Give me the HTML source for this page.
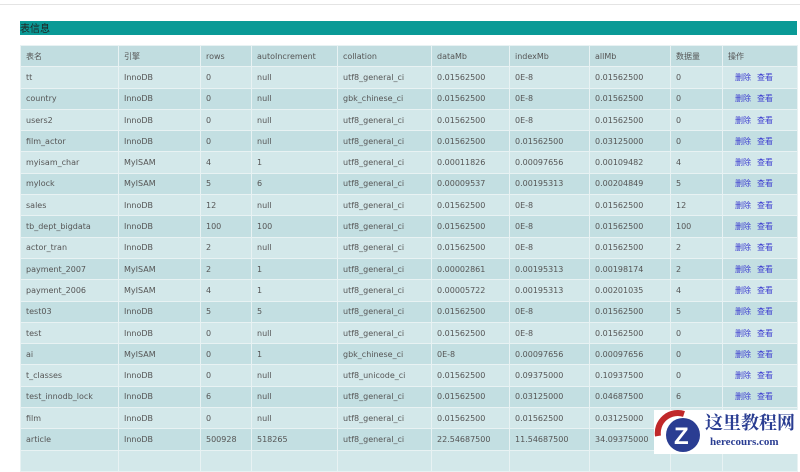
<!DOCTYPE html>
<html><head><meta charset="utf-8"><style>
*{margin:0;padding:0;box-sizing:border-box}
body{width:800px;height:454px;overflow:hidden;background:#fff;font-family:"DejaVu Sans","Noto Sans CJK SC",sans-serif;font-size:8px;color:#555;position:relative}
.top{position:absolute;left:0;top:4px;width:800px;height:1px;background:#e4e4e4}
.bar{position:absolute;left:20px;top:21px;width:777px;height:14px;background:#0a9a96;color:#222;font-size:10px;line-height:14px;font-family:"Noto Sans CJK SC",sans-serif}
table{position:absolute;left:20px;top:45px;width:777px;border-collapse:collapse;table-layout:fixed}
td{height:21.3px;border:1px solid #e8f2f3;padding-left:5px;white-space:nowrap;overflow:hidden;font-family:"DejaVu Sans","Noto Sans CJK SC",sans-serif;font-size:8px}
tr.h td{background:#c1dde0}
tr:nth-child(even) td{background:#d3e8ea}
tr:nth-child(odd):not(.h) td{background:#c3dfe2}
a{color:#3b3bd0;text-decoration:none;margin-left:7px;margin-right:6px;font-family:"Noto Sans CJK SC",sans-serif}
.logo{position:absolute;left:654px;top:410px;width:146px;height:44px;background:#fff}
</style></head><body>
<div class="top"></div>
<div class="bar">表信息</div>
<table>
<colgroup><col style="width:98px"><col style="width:82px"><col style="width:51px"><col style="width:86px"><col style="width:94px"><col style="width:78px"><col style="width:80px"><col style="width:81px"><col style="width:52px"><col style="width:75px"></colgroup>
<tr class="h"><td>表名</td><td>引擎</td><td>rows</td><td>autoIncrement</td><td>collation</td><td>dataMb</td><td>indexMb</td><td>allMb</td><td>数据量</td><td>操作</td></tr>
<tr><td>tt</td><td>InnoDB</td><td>0</td><td>null</td><td>utf8_general_ci</td><td>0.01562500</td><td>0E-8</td><td>0.01562500</td><td>0</td><td><a>删除</a><a style="margin-left:0">查看</a></td></tr>
<tr><td>country</td><td>InnoDB</td><td>0</td><td>null</td><td>gbk_chinese_ci</td><td>0.01562500</td><td>0E-8</td><td>0.01562500</td><td>0</td><td><a>删除</a><a style="margin-left:0">查看</a></td></tr>
<tr><td>users2</td><td>InnoDB</td><td>0</td><td>null</td><td>utf8_general_ci</td><td>0.01562500</td><td>0E-8</td><td>0.01562500</td><td>0</td><td><a>删除</a><a style="margin-left:0">查看</a></td></tr>
<tr><td>film_actor</td><td>InnoDB</td><td>0</td><td>null</td><td>utf8_general_ci</td><td>0.01562500</td><td>0.01562500</td><td>0.03125000</td><td>0</td><td><a>删除</a><a style="margin-left:0">查看</a></td></tr>
<tr><td>myisam_char</td><td>MyISAM</td><td>4</td><td>1</td><td>utf8_general_ci</td><td>0.00011826</td><td>0.00097656</td><td>0.00109482</td><td>4</td><td><a>删除</a><a style="margin-left:0">查看</a></td></tr>
<tr><td>mylock</td><td>MyISAM</td><td>5</td><td>6</td><td>utf8_general_ci</td><td>0.00009537</td><td>0.00195313</td><td>0.00204849</td><td>5</td><td><a>删除</a><a style="margin-left:0">查看</a></td></tr>
<tr><td>sales</td><td>InnoDB</td><td>12</td><td>null</td><td>utf8_general_ci</td><td>0.01562500</td><td>0E-8</td><td>0.01562500</td><td>12</td><td><a>删除</a><a style="margin-left:0">查看</a></td></tr>
<tr><td>tb_dept_bigdata</td><td>InnoDB</td><td>100</td><td>100</td><td>utf8_general_ci</td><td>0.01562500</td><td>0E-8</td><td>0.01562500</td><td>100</td><td><a>删除</a><a style="margin-left:0">查看</a></td></tr>
<tr><td>actor_tran</td><td>InnoDB</td><td>2</td><td>null</td><td>utf8_general_ci</td><td>0.01562500</td><td>0E-8</td><td>0.01562500</td><td>2</td><td><a>删除</a><a style="margin-left:0">查看</a></td></tr>
<tr><td>payment_2007</td><td>MyISAM</td><td>2</td><td>1</td><td>utf8_general_ci</td><td>0.00002861</td><td>0.00195313</td><td>0.00198174</td><td>2</td><td><a>删除</a><a style="margin-left:0">查看</a></td></tr>
<tr><td>payment_2006</td><td>MyISAM</td><td>4</td><td>1</td><td>utf8_general_ci</td><td>0.00005722</td><td>0.00195313</td><td>0.00201035</td><td>4</td><td><a>删除</a><a style="margin-left:0">查看</a></td></tr>
<tr><td>test03</td><td>InnoDB</td><td>5</td><td>5</td><td>utf8_general_ci</td><td>0.01562500</td><td>0E-8</td><td>0.01562500</td><td>5</td><td><a>删除</a><a style="margin-left:0">查看</a></td></tr>
<tr><td>test</td><td>InnoDB</td><td>0</td><td>null</td><td>utf8_general_ci</td><td>0.01562500</td><td>0E-8</td><td>0.01562500</td><td>0</td><td><a>删除</a><a style="margin-left:0">查看</a></td></tr>
<tr><td>ai</td><td>MyISAM</td><td>0</td><td>1</td><td>gbk_chinese_ci</td><td>0E-8</td><td>0.00097656</td><td>0.00097656</td><td>0</td><td><a>删除</a><a style="margin-left:0">查看</a></td></tr>
<tr><td>t_classes</td><td>InnoDB</td><td>0</td><td>null</td><td>utf8_unicode_ci</td><td>0.01562500</td><td>0.09375000</td><td>0.10937500</td><td>0</td><td><a>删除</a><a style="margin-left:0">查看</a></td></tr>
<tr><td>test_innodb_lock</td><td>InnoDB</td><td>6</td><td>null</td><td>utf8_general_ci</td><td>0.01562500</td><td>0.03125000</td><td>0.04687500</td><td>6</td><td><a>删除</a><a style="margin-left:0">查看</a></td></tr>
<tr><td>film</td><td>InnoDB</td><td>0</td><td>null</td><td>utf8_general_ci</td><td>0.01562500</td><td>0.01562500</td><td>0.03125000</td><td>0</td><td><a>删除</a><a style="margin-left:0">查看</a></td></tr>
<tr><td>article</td><td>InnoDB</td><td>500928</td><td>518265</td><td>utf8_general_ci</td><td>22.54687500</td><td>11.54687500</td><td>34.09375000</td><td>0</td><td><a>删除</a><a style="margin-left:0">查看</a></td></tr>
<tr><td></td><td></td><td></td><td></td><td></td><td></td><td></td><td></td><td></td><td></td></tr>
</table>
<div class="logo">
<svg width="146" height="44" style="position:absolute;left:0;top:0">
<path d="M4 26 A20 20 0 0 1 30 4" stroke="#c0282a" stroke-width="6" fill="none"/>
<circle cx="29" cy="25" r="17" fill="#2a3d92"/>
<text x="20" y="34" font-family="Liberation Sans" font-weight="bold" font-size="24" fill="#fff">Z</text>
</svg>
<div style="position:absolute;left:51px;top:1px;font-family:'Noto Serif CJK SC',serif;font-weight:bold;font-size:18px;color:#2a3d92;line-height:22px">这里教程网</div>
<div style="position:absolute;left:56px;top:26px;font-family:'Liberation Serif',serif;font-weight:bold;font-size:11px;color:#2a3d92">herecours.com</div>
</div>
</body></html>
